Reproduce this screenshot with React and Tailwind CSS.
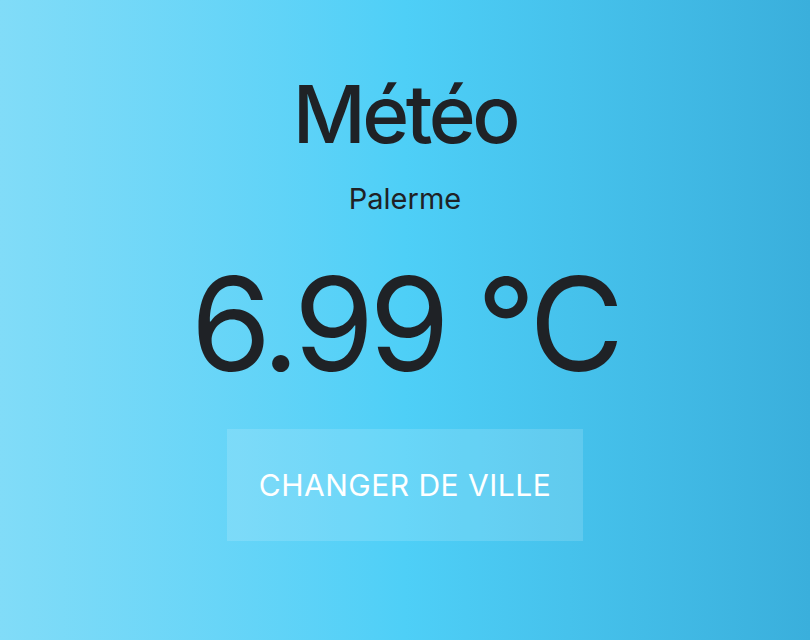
export default function App() {
  return (
    <div className="w-full h-[640px] bg-gradient-to-r from-[#81dcf8] via-[#4ecff7] to-[#3aafdc] font-['Inter',sans-serif] text-[#1f2226] flex flex-col items-center">
      <h1 className="mt-[66px] text-[80px] leading-[96px] font-medium tracking-[-3.5px]">Météo</h1>
      <p className="mt-[17px] text-[29px] leading-[40px]">Palerme</p>
      <p className="mt-[30px] text-[130px] leading-[150px] tracking-[-5px]">6.99 °C</p>
      <button className="mt-[30px] w-[356px] h-[112px] bg-white/15 text-white text-[30px] tracking-[0.5px]">
        CHANGER DE VILLE
      </button>
    </div>
  );
}
